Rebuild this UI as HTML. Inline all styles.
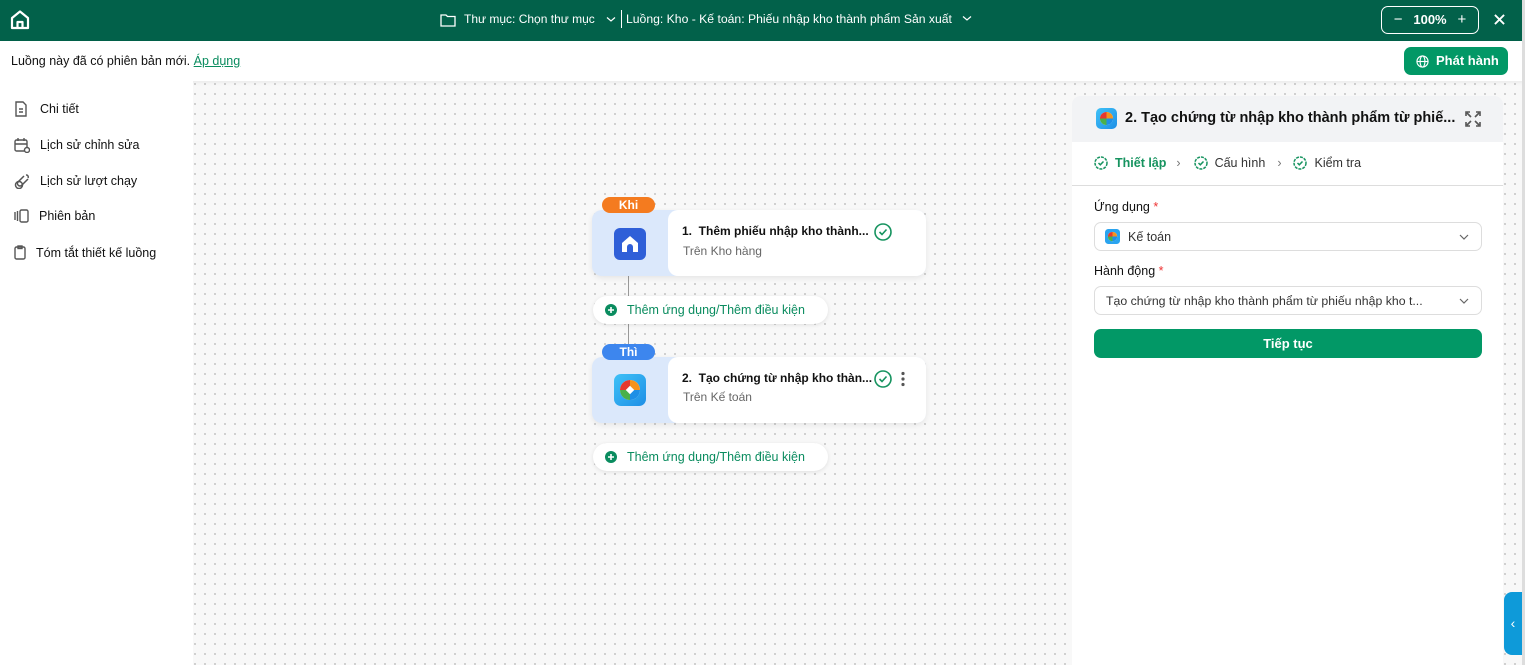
<!DOCTYPE html>
<html><head><meta charset="utf-8"><style>
*{box-sizing:border-box;margin:0;padding:0}
body{width:1525px;height:665px;overflow:hidden;font-family:"Liberation Sans",sans-serif;font-size:13px;color:#111;position:relative;background:#f8f8f8}
.top{position:absolute;left:0;top:0;width:1525px;height:41px;background:#02614a;color:#fff}
.sub{position:absolute;left:0;top:41px;width:1525px;height:40px;background:#fff;box-shadow:0 2px 4px rgba(0,0,0,.05)}
.canvas{position:absolute;left:193px;top:81px;right:0;bottom:0;background-color:#f8f8f8;background-image:radial-gradient(circle,#b5b5b5 0.7px,transparent 1px);background-size:10px 10px;background-position:-3px -2px}
.side{position:absolute;left:0;top:81px;width:193px;bottom:0;background:#fff}
.side div{position:absolute;left:14px;display:flex;align-items:center;gap:10px;font-size:12.5px}
.node{position:absolute;left:592px;width:334px;height:66px;border-radius:10px;background:#dbe8fb;box-shadow:0 2px 6px rgba(0,0,0,.08)}
.node .inner{position:absolute;left:76px;top:0;right:0;bottom:0;background:#fff;border-radius:10px}
.tag{position:absolute;left:602px;width:53px;height:16px;border-radius:8px;color:#fff;font-size:12px;font-weight:bold;text-align:center;line-height:16px}
.add{position:absolute;left:593px;width:235px;height:28px;border-radius:14px;background:#fff;box-shadow:0 1px 4px rgba(0,0,0,.1);color:#0a8c5f;font-size:12.5px;display:flex;align-items:center;padding-left:12px;gap:10px}
.panel{position:absolute;left:1072px;top:96px;width:431px;bottom:0;background:#fff;border-radius:8px 8px 0 0}
.sel{position:absolute;left:22px;width:388px;height:29px;border:1px solid #ddd;border-radius:7px;display:flex;align-items:center;padding-left:10px;font-size:12.5px;color:#333}
.chev{position:absolute;right:12px;top:10px}
</style></head><body>
<div class="canvas"></div>
<div class="top">
<svg style="position:absolute;left:9px;top:9px" width="22" height="22" viewBox="0 0 22 22" fill="none" stroke="#fff" stroke-width="2.2" stroke-linejoin="round"><path d="M3 9 L11 2.5 L19 9 V19 H3 Z"/><path d="M8.5 19 V13 H13.5 V19"/></svg>
<svg style="position:absolute;left:440px;top:13px" width="16" height="14" viewBox="0 0 16 14" fill="none" stroke="#fff" stroke-width="1.3"><path d="M1 2 H6 L7.5 3.5 H15 V13 H1 Z"/></svg>
<div style="position:absolute;left:464px;top:12px;font-size:12px">Thư mục: Chọn thư mục</div>
<svg style="position:absolute;left:606px;top:16px" width="10" height="7" viewBox="0 0 10 7" fill="none" stroke="#fff" stroke-width="1.2"><path d="M1 1.5 L5 5 L9 1.5"/></svg>
<div style="position:absolute;left:621px;top:10px;width:1px;height:18px;background:#fff"></div>
<div style="position:absolute;left:626px;top:12px;font-size:12.2px">Luồng: Kho - Kế toán: Phiếu nhập kho thành phẩm Sản xuất</div>
<svg style="position:absolute;left:962px;top:15px" width="10" height="7" viewBox="0 0 10 7" fill="none" stroke="#fff" stroke-width="1.2"><path d="M1 1.5 L5 5 L9 1.5"/></svg>
<div style="position:absolute;left:1381px;top:6px;width:98px;height:28px;border:1px solid #fff;border-radius:7px;font-size:13px;font-weight:bold;line-height:26px;text-align:center"><span style="font-weight:normal;font-size:15px">−</span>&nbsp;&nbsp;&nbsp;100%&nbsp;&nbsp;&nbsp;<span style="font-weight:normal;font-size:15px">+</span></div>
<svg style="position:absolute;left:1494px;top:14px" width="11" height="11" viewBox="0 0 12 12" stroke="#fff" stroke-width="2"><path d="M1 1 L11 11 M11 1 L1 11"/></svg>
</div>
<div class="sub">
<div style="position:absolute;left:11px;top:13px;font-size:12.5px">Luồng này đã có phiên bản mới. <span style="color:#0a8c5f;text-decoration:underline">Áp dụng</span></div>
<div style="position:absolute;left:1404px;top:6px;width:104px;height:28px;background:#029866;border-radius:7px;color:#fff;font-weight:bold;font-size:13px;line-height:28px;padding-left:32px">Phát hành
<svg style="position:absolute;left:12px;top:8px" width="13" height="13" viewBox="0 0 14 14" fill="none" stroke="#fff" stroke-width="1.2"><circle cx="7" cy="7" r="6"/><ellipse cx="7" cy="7" rx="2.6" ry="6"/><path d="M1 7 H13"/></svg></div>
</div>
<div class="side">
<div style="top:20px"><svg width="14" height="16" viewBox="0 0 14 16" fill="none" stroke="#555" stroke-width="1.4"><path d="M2 1 H9 L12 4 V15 H2 Z M5 8 H9 M5 11 H9"/></svg><span style="margin-left:2px">Chi tiết</span></div>
<div style="top:56px"><svg width="16" height="16" viewBox="0 0 16 16" fill="none" stroke="#555" stroke-width="1.4"><rect x="1" y="3" width="12" height="11" rx="1.5"/><path d="M4 1 V4 M10 1 V4 M1 7 H13"/><circle cx="13" cy="13" r="2.5" fill="#fff"/></svg><span>Lịch sử chỉnh sửa</span></div>
<div style="top:92px"><svg width="16" height="16" viewBox="0 0 16 16" fill="none" stroke="#555" stroke-width="1.5"><path d="M10 3 L4 9 A2.5 2.5 0 0 0 8 12 L14 6 M12 2 A2 2 0 0 1 14 5"/><circle cx="5" cy="12" r="3.5"/></svg><span>Lịch sử lượt chạy</span></div>
<div style="top:128px"><svg width="15" height="14" viewBox="0 0 15 14" fill="none" stroke="#555" stroke-width="1.4"><rect x="6" y="1" width="8" height="12" rx="1.5"/><path d="M1 3 V11 M3.5 2 V12"/></svg><span>Phiên bản</span></div>
<div style="top:164px;left:14px"><svg width="12" height="15" viewBox="0 0 12 15" fill="none" stroke="#555" stroke-width="1.4"><rect x="1" y="2" width="10" height="12" rx="1.5"/><rect x="4" y="1" width="4" height="2.5"/></svg><span>Tóm tắt thiết kế luồng</span></div>
</div>

<div style="position:absolute;left:628px;top:276px;width:1px;height:22px;background:#999"></div>
<div style="position:absolute;left:628px;top:323px;width:1px;height:22px;background:#999"></div>

<div class="node" style="top:210px"><div class="inner">
<div style="position:absolute;left:14px;top:14px;font-weight:bold;font-size:12px">1.&nbsp; Thêm phiếu nhập kho thành...</div>
<div style="position:absolute;left:15px;top:34px;color:#666;font-size:12px">Trên Kho hàng</div>
<svg style="position:absolute;left:206px;top:13px" width="18" height="18" viewBox="0 0 18 18" fill="none" stroke="#16935f" stroke-width="1.6"><circle cx="9" cy="9" r="8"/><path d="M5.5 9 L8 11.5 L12.5 6.5"/></svg>
</div>
<div style="position:absolute;left:22px;top:18px;width:32px;height:32px;border-radius:6px;background:#2f5fd8"><svg width="32" height="32" viewBox="0 0 32 32"><path d="M8 15 L16 8 L24 15 V24 H8 Z" fill="#fff"/><path d="M13 24 V19 A3 3 0 0 1 19 19 V24 Z" fill="#2f5fd8"/></svg></div>
</div>
<div class="tag" style="top:197px;background:#f47b1f">Khi</div>
<div class="add" style="top:296px"><svg width="12" height="12" viewBox="0 0 12 12"><circle cx="6" cy="6" r="6" fill="#0a8c5f"/><path d="M6 3 V9 M3 6 H9" stroke="#fff" stroke-width="1.6"/></svg>Thêm ứng dụng/Thêm điều kiện</div>

<div class="node" style="top:357px"><div class="inner">
<div style="position:absolute;left:14px;top:14px;font-weight:bold;font-size:12px">2.&nbsp; Tạo chứng từ nhập kho thàn...</div>
<div style="position:absolute;left:15px;top:33px;color:#666;font-size:12px">Trên Kế toán</div>
<svg style="position:absolute;left:206px;top:13px" width="18" height="18" viewBox="0 0 18 18" fill="none" stroke="#16935f" stroke-width="1.6"><circle cx="9" cy="9" r="8"/><path d="M5.5 9 L8 11.5 L12.5 6.5"/></svg>
<svg style="position:absolute;left:232px;top:14px" width="6" height="16" viewBox="0 0 6 16" fill="#555"><circle cx="3" cy="2.5" r="1.6"/><circle cx="3" cy="8" r="1.6"/><circle cx="3" cy="13.5" r="1.6"/></svg>
</div>
<div style="position:absolute;left:22px;top:17px;width:32px;height:32px;border-radius:7px;background:linear-gradient(135deg,#3fc1f7,#1e8fe6)"><svg width="32" height="32" viewBox="0 0 32 32"><circle cx="16" cy="16" r="10" fill="#fff"/><path d="M16 6 A10 10 0 0 1 26 16 L16 16 Z" fill="#f6931d"/><path d="M26 16 A10 10 0 0 1 16 26 L16 16 Z" fill="#1e8fe6"/><path d="M16 26 A10 10 0 0 1 6 16 L16 16 Z" fill="#49b04a"/><path d="M6 16 A10 10 0 0 1 16 6 L16 16 Z" fill="#e6382f"/><rect x="13" y="13" width="6" height="6" fill="#fff" transform="rotate(45 16 16)"/></svg></div>
</div>
<div class="tag" style="top:344px;background:#3d86ee">Thì</div>
<div class="add" style="top:443px"><svg width="12" height="12" viewBox="0 0 12 12"><circle cx="6" cy="6" r="6" fill="#0a8c5f"/><path d="M6 3 V9 M3 6 H9" stroke="#fff" stroke-width="1.6"/></svg>Thêm ứng dụng/Thêm điều kiện</div>

<div class="panel">
<div style="position:absolute;left:0;top:0;right:0;height:46px;background:#f2f3f5;border-radius:8px 8px 0 0"></div>
<div style="position:absolute;left:24px;top:12px;width:21px;height:21px;border-radius:5px;background:linear-gradient(135deg,#3fc1f7,#1e8fe6)"><svg width="21" height="21" viewBox="0 0 32 32"><circle cx="16" cy="16" r="10" fill="#fff"/><path d="M16 6 A10 10 0 0 1 26 16 L16 16 Z" fill="#f6931d"/><path d="M26 16 A10 10 0 0 1 16 26 L16 16 Z" fill="#1e8fe6"/><path d="M16 26 A10 10 0 0 1 6 16 L16 16 Z" fill="#49b04a"/><path d="M6 16 A10 10 0 0 1 16 6 L16 16 Z" fill="#e6382f"/></svg></div>
<div style="position:absolute;left:53px;top:14px;font-size:14.5px;font-weight:bold">2. Tạo chứng từ nhập kho thành phẩm từ phiế...</div>
<svg style="position:absolute;left:393px;top:15px" width="16" height="16" viewBox="0 0 16 16" fill="none" stroke="#555" stroke-width="1.6"><path d="M1 5 V1 H5 M11 1 H15 V5 M15 11 V15 H11 M5 15 H1 V11 M2 2 L6 6 M14 2 L10 6 M14 14 L10 10 M2 14 L6 10"/></svg>
<div style="position:absolute;left:22px;top:60px;display:flex;align-items:center;font-size:12.5px;color:#333">
<svg width="14" height="14" viewBox="0 0 14 14" fill="none" stroke="#16935f" stroke-width="1.5"><circle cx="7" cy="7" r="6" stroke-dasharray="3 1"/><path d="M4.5 7 L6.3 8.8 L9.5 5.5"/></svg>
<span style="margin-left:7px;color:#16935f;font-weight:bold">Thiết lập</span>
<span style="margin:0 13px 0 10px;color:#777">›</span>
<svg width="14" height="14" viewBox="0 0 14 14" fill="none" stroke="#16935f" stroke-width="1.5"><circle cx="7" cy="7" r="6" stroke-dasharray="3 1"/><path d="M4.5 7 L6.3 8.8 L9.5 5.5"/></svg>
<span style="margin-left:7px">Cấu hình</span>
<span style="margin:0 12px 0 12px;color:#777">›</span>
<svg width="14" height="14" viewBox="0 0 14 14" fill="none" stroke="#16935f" stroke-width="1.5"><circle cx="7" cy="7" r="6" stroke-dasharray="3 1"/><path d="M4.5 7 L6.3 8.8 L9.5 5.5"/></svg>
<span style="margin-left:7px">Kiểm tra</span>
</div>
<div style="position:absolute;left:0;right:0;top:89px;height:1px;background:#ddd"></div>
<div style="position:absolute;left:22px;top:104px;font-size:12.5px">Ứng dụng <span style="color:#e33">*</span></div>
<div class="sel" style="top:126px"><svg width="15" height="15" viewBox="0 0 32 32"><rect width="32" height="32" rx="7" fill="#2aa4ef"/><circle cx="16" cy="16" r="10" fill="#fff"/><path d="M16 6 A10 10 0 0 1 26 16 L16 16 Z" fill="#f6931d"/><path d="M26 16 A10 10 0 0 1 16 26 L16 16 Z" fill="#1e8fe6"/><path d="M16 26 A10 10 0 0 1 6 16 L16 16 Z" fill="#49b04a"/><path d="M6 16 A10 10 0 0 1 16 6 L16 16 Z" fill="#e6382f"/></svg><span style="margin-left:8px">Kế toán</span><svg class="chev" width="10" height="8" viewBox="0 0 10 8" fill="none" stroke="#666" stroke-width="1.2"><path d="M1 2 L5 6 L9 2"/></svg></div>
<div style="position:absolute;left:22px;top:168px;font-size:12.5px">Hành động <span style="color:#e33">*</span></div>
<div class="sel" style="top:190px"><span style="margin-left:1px;font-size:12.3px">Tạo chứng từ nhập kho thành phẩm từ phiếu nhập kho t...</span><svg class="chev" width="10" height="8" viewBox="0 0 10 8" fill="none" stroke="#666" stroke-width="1.2"><path d="M1 2 L5 6 L9 2"/></svg></div>
<div style="position:absolute;left:22px;top:233px;width:388px;height:29px;background:#029866;border-radius:7px;color:#fff;font-weight:bold;text-align:center;line-height:29px;font-size:13px">Tiếp tục</div>
</div>
<div style="position:absolute;left:1504px;top:592px;width:18px;height:63px;background:#0e9ad9;border-radius:8px 0 0 8px;color:#fff;font-size:14px;line-height:63px;text-align:center">‹</div>
<div style="position:absolute;left:1522px;top:0;width:3px;height:665px;background:#ddd"></div>
</body></html>
